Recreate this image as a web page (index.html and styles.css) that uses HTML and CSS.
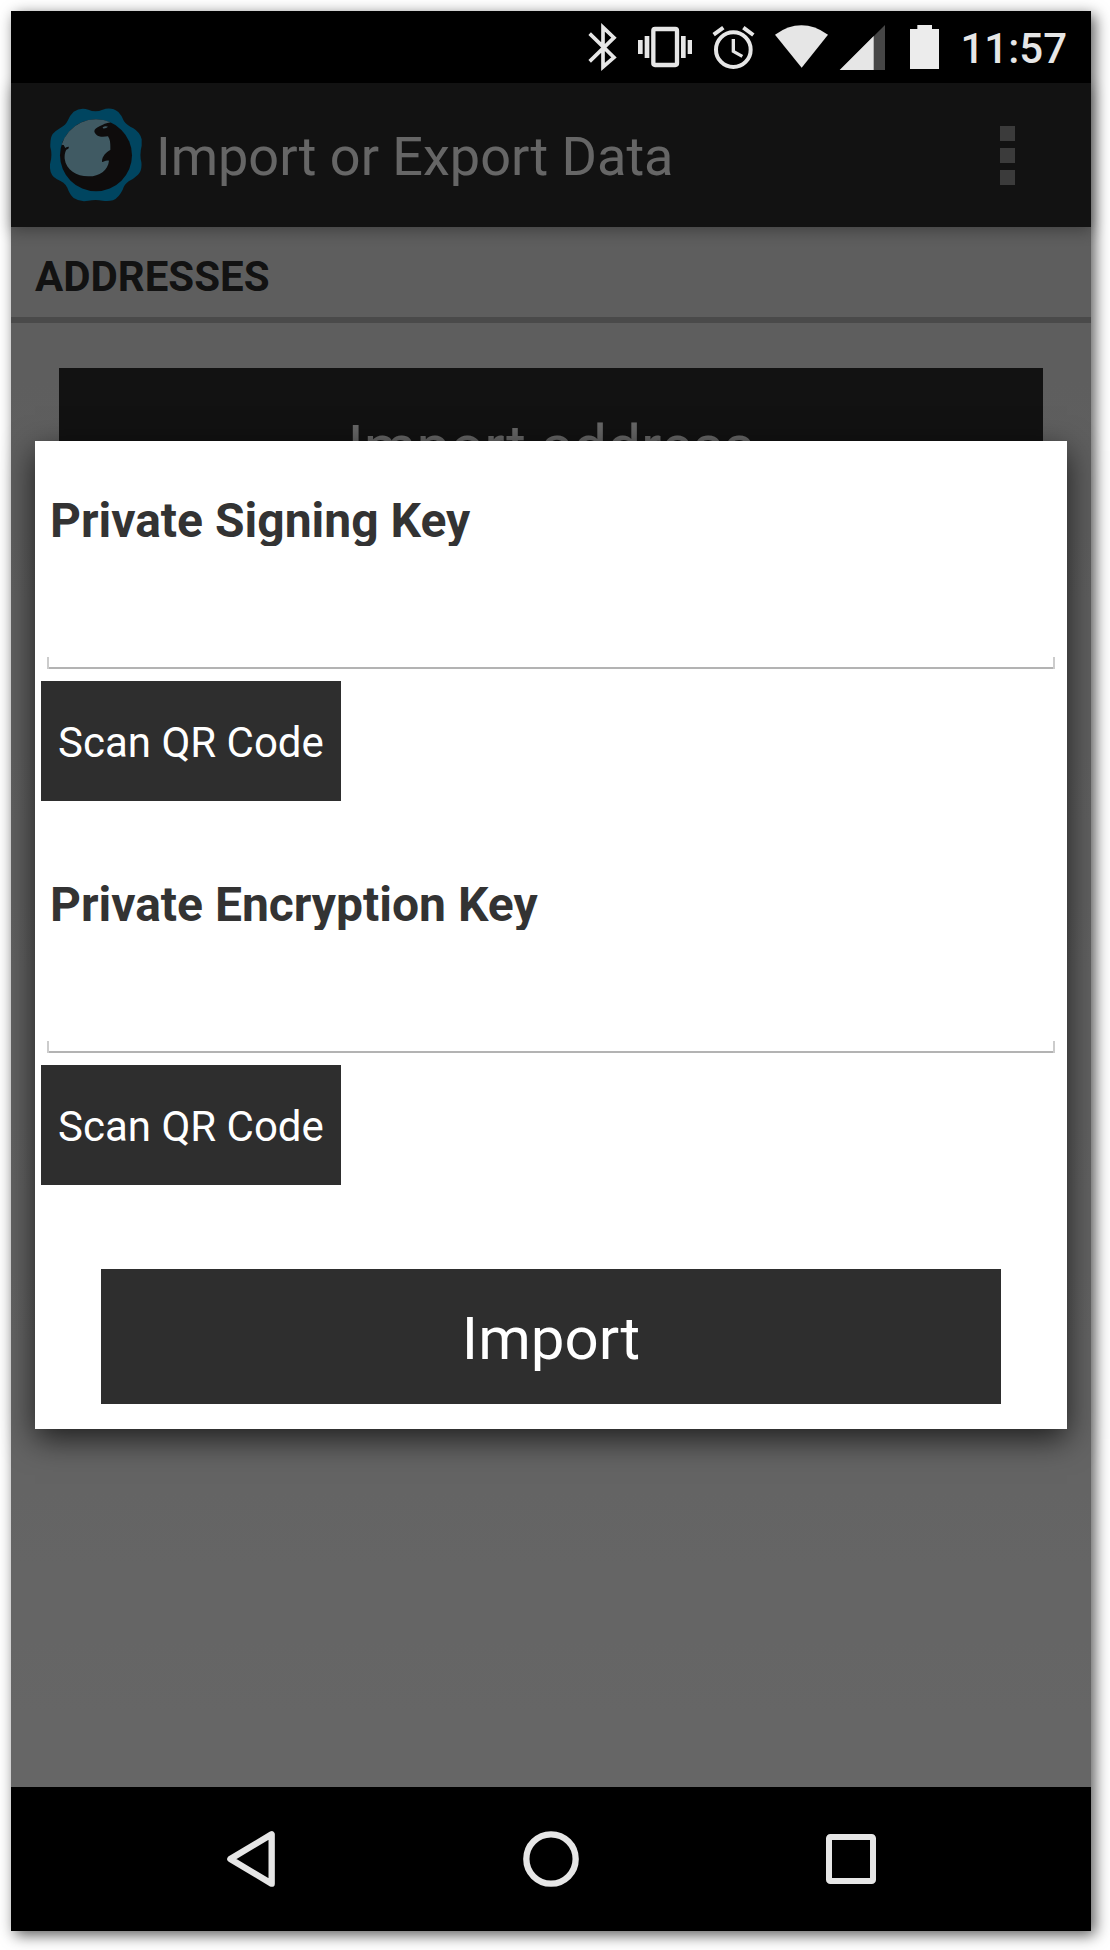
FILE: index.html
```html
<!DOCTYPE html>
<html lang="en">
<head>
  <meta charset="utf-8">
  <meta name="viewport" content="width=device-width, initial-scale=1">
  <title>Import or Export Data</title>
  <link rel="stylesheet" href="styles.css">
</head>
<body>
  <div class="phone">
    <div class="status-bar">
      <svg class="status-icon" width="51" height="72" viewBox="18 33 153 216" aria-hidden="true">
        <path d="M59 101L132 172L99 201V82L132 113L59 184" fill="none" stroke="#e6e6e6" stroke-width="11"/>
      </svg>
      <svg class="status-icon" width="75" height="72" viewBox="171 33 225 216" aria-hidden="true">
        <rect x="250" y="87" width="71" height="108" rx="5" fill="none" stroke="#e6e6e6" stroke-width="13"/>
        <path d="M204 120h14v42h-14zM224 108h14v66h-14zM333 108h14v66h-14zM353 120h13v42h-13z" fill="#e6e6e6"/>
      </svg>
      <svg class="status-icon" width="63" height="72" viewBox="396 33 189 216" aria-hidden="true">
        <circle cx="490" cy="149" r="52" fill="none" stroke="#e6e6e6" stroke-width="12"/>
        <path d="M490 117V154L517 169" fill="none" stroke="#e6e6e6" stroke-width="10"/>
        <path d="M431 104L460 83M520 83L550 105" fill="none" stroke="#e6e6e6" stroke-width="12"/>
      </svg>
      <svg class="status-icon" width="69" height="72" viewBox="585 33 207 216" aria-hidden="true">
        <path d="M615 104Q694 48 774 104L695 203Z" fill="#e6e6e6"/>
      </svg>
      <svg class="status-icon" width="63" height="72" viewBox="12 33 189 216" aria-hidden="true">
        <path d="M165 75V210H29Z" fill="#464646"/>
        <path d="M131 108V210H29Z" fill="#e6e6e6"/>
      </svg>
      <svg class="status-icon" width="54" height="72" viewBox="201 33 162 216" aria-hidden="true">
        <path d="M262 75H306V87H327V207H240V87H262Z" fill="#ececec"/>
      </svg>
      <time class="clock">11:57</time>
    </div>

    <main class="screen">
      <header class="action-bar">
        <svg class="logo" width="96" height="96" viewBox="24 35 288 288" aria-hidden="true">
          <path d="M101 49Q122 35 145 43Q166 52 188 43Q214 34 235 50Q247 62 252 78Q261 90 280 99Q300 111 305 132V151Q298 178 304 200Q307 225 294 238Q280 251 266 258Q253 267 248 283Q237 306 219 315Q203 319 188 316Q167 312 145 316Q121 321 101 308Q89 297 82 277Q74 261 51 252Q32 243 30 219V207Q38 179 31 155Q30 127 38 116Q48 105 62 97Q77 89 83 76Q91 58 101 49Z" fill="#00acf0"/>
          <circle cx="168" cy="180" r="108" fill="#231e20"/>
          <path d="M65 148A108 108 0 0 1 212 81C198 83 189 88 180 92C165 98 158 107 167 116C176 127 193 125 204 123C212 134 211 150 211 164C200 169 185 183 186 200C192 200 196 194 207 196C204 225 178 243 147 243C112 244 78 224 74 190C73 178 76 168 79 163Q87 161 87 154Q80 154 76 158L71 149Z" fill="#a0e1f8"/>
          <path d="M188 96Q195 91 204 94Q198 100 189 99Z" fill="#a0e1f8"/>
        </svg>
        <h1 class="title">Import or Export Data</h1>
        <button class="overflow" type="button" aria-label="More options">
          <span class="overflow-dot"></span>
          <span class="overflow-dot"></span>
          <span class="overflow-dot"></span>
        </button>
      </header>
      <div class="content">
        <h2 class="section-title">ADDRESSES</h2>
        <button class="button button-wide" type="button">Import address</button>
      </div>

      <div class="scrim">
        <form class="dialog">
          <div class="field">
            <label class="field-label" for="signing-key">Private Signing Key</label>
            <input class="field-input" id="signing-key" type="text">
            <button class="button button-scan" type="button">Scan QR Code</button>
          </div>
          <div class="field">
            <label class="field-label" for="encryption-key">Private Encryption Key</label>
            <input class="field-input" id="encryption-key" type="text">
            <button class="button button-scan" type="button">Scan QR Code</button>
          </div>
          <button class="button button-import" type="button">Import</button>
        </form>
      </div>
    </main>

    <nav class="nav-bar">
      <button class="nav-button" type="button" aria-label="Back">
        <svg width="60" height="60" viewBox="63 177 180 180"><path d="M91 267L215 193V341Z" fill="none" stroke="#e6e6e6" stroke-width="19" stroke-linejoin="round"/></svg>
      </button>
      <button class="nav-button" type="button" aria-label="Home">
        <svg width="60" height="60" viewBox="963 177 180 180"><circle cx="1053" cy="267" r="74" fill="none" stroke="#e6e6e6" stroke-width="19"/></svg>
      </button>
      <button class="nav-button" type="button" aria-label="Recent apps">
        <svg width="60" height="60" viewBox="123 177 180 180"><rect x="147" y="201" width="132" height="132" rx="4" fill="none" stroke="#e6e6e6" stroke-width="18"/></svg>
      </button>
    </nav>
  </div>
</body>
</html>
```
FILE: styles.css
```css
* {
  box-sizing: border-box;
}

body {
  margin: 0;
  padding: 11px 19px 19px 11px;
  min-height: 100vh;
  display: flex;
  background: #fff;
  font-family: Roboto, "Liberation Sans", sans-serif;
}

button {
  font-family: inherit;
  border: 0;
  padding: 0;
  cursor: pointer;
}

.phone {
  flex: 1;
  display: flex;
  flex-direction: column;
  box-shadow: 4px 4px 14px rgba(0, 0, 0, 0.65);
}

.status-bar {
  display: flex;
  align-items: center;
  justify-content: flex-end;
  height: 72px;
  padding-right: 24px;
  background: #000;
}

.status-icon {
  flex: none;
}

.clock {
  margin-left: 9px;
  padding-top: 4px;
  color: #e6e6e6;
  font-size: 42px;
  font-weight: 500;
  line-height: 48px;
}

.screen {
  position: relative;
  flex: 1;
  display: flex;
  flex-direction: column;
  background: linear-gradient(#e8e8e8, #fff);
}

.action-bar {
  display: flex;
  align-items: center;
  gap: 12px;
  height: 144px;
  padding: 0 60px 0 37px;
  background: #2e2e2e;
  box-shadow: 0 4px 14px rgba(0, 0, 0, 0.3);
}

.title {
  flex: 1;
  margin: 0;
  padding-top: 4px;
  color: #fff;
  font-size: 54px;
  font-weight: 400;
  line-height: 64px;
}

.overflow {
  display: flex;
  flex-direction: column;
  align-items: center;
  gap: 7px;
  width: 48px;
  background: none;
}

.overflow-dot {
  width: 15px;
  height: 15px;
  background: #949494;
}

.content {
  display: flex;
  flex-direction: column;
}

.section-title {
  margin: 0;
  padding: 25px 24px 16px;
  border-bottom: 6px solid #b9b9b9;
  color: #2e2e2e;
  font-size: 42px;
  font-weight: 700;
  line-height: 49px;
}

.button {
  padding-top: 3px;
  background: #2e2e2e;
  color: #fff;
}

.button-wide {
  margin: 45px 48px 0;
  height: 153px;
  font-size: 60px;
}

.scrim {
  position: absolute;
  inset: 0;
  display: flex;
  align-items: center;
  padding: 0 24px;
  background: rgba(0, 0, 0, 0.6);
}

.dialog {
  flex: 1;
  display: flex;
  flex-direction: column;
  gap: 75px;
  padding: 51px 0 25px;
  background: #fff;
  box-shadow: 0 10px 30px rgba(0, 0, 0, 0.7);
}

.field {
  display: flex;
  flex-direction: column;
}

.field-label {
  height: 54px;
  padding: 0 15px;
  overflow: hidden;
  color: #333;
  font-size: 48px;
  font-weight: 700;
  line-height: 58px;
}

.field-input {
  height: 123px;
  margin: 0 12px 12px;
  padding: 0 12px;
  border: 0;
  outline: 0;
  border-radius: 0;
  color: #333;
  font: inherit;
  font-size: 48px;
  background:
    linear-gradient(#ccc, #ccc) left bottom / 2px 12px no-repeat,
    linear-gradient(#ccc, #ccc) right bottom / 2px 12px no-repeat,
    linear-gradient(#b3b3b3, #b3b3b3) left bottom / 100% 2px no-repeat;
}

.button-scan {
  align-self: flex-start;
  height: 120px;
  margin-left: 6px;
  padding: 3px 17px 0;
  font-size: 42px;
}

.button-import {
  height: 135px;
  margin: 9px 66px 0;
  font-size: 60px;
}

.nav-bar {
  display: flex;
  height: 144px;
  padding: 0 90px;
  background: #000;
}

.nav-button {
  flex: 1;
  display: flex;
  align-items: center;
  justify-content: center;
  background: none;
}
```
